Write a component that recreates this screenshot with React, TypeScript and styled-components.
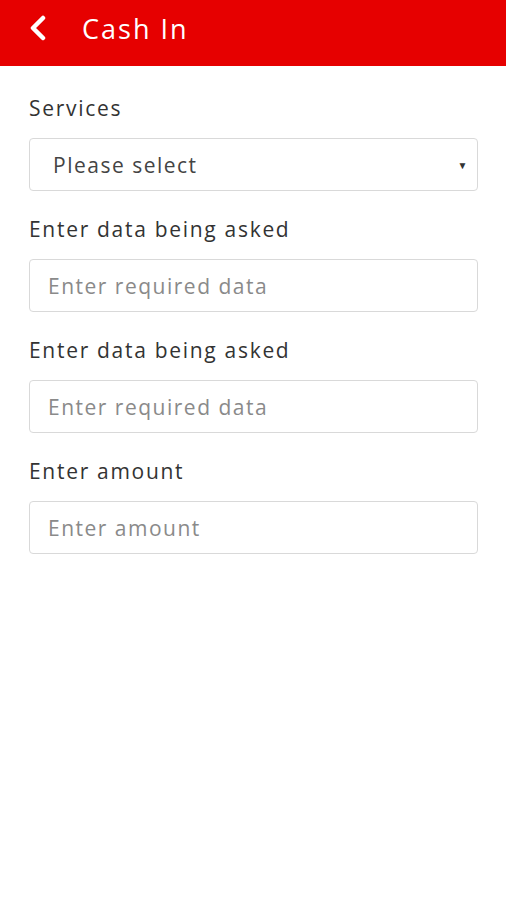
import { createGlobalStyle, styled } from 'styled-components'

const Global = createGlobalStyle`
  body {
    margin: 0;
    background: #fff;
    font-family: "Open Sans", sans-serif;
  }
  * { box-sizing: border-box; }
`

type Field = {
  label: string
  placeholder: string
  select?: boolean
}

const fields: Field[] = [
  { label: 'Services', placeholder: 'Please select', select: true },
  { label: 'Enter data being asked', placeholder: 'Enter required data' },
  { label: 'Enter data being asked', placeholder: 'Enter required data' },
  { label: 'Enter amount', placeholder: 'Enter amount' },
]

export default function App() {
  return (
    <Page>
      <Global />
      <Header>
        <BackButton aria-label="back">
          <svg width="20" height="26" viewBox="0 0 20 26">
            <polyline points="15,3 5,13 15,23" fill="none" stroke="#fff" strokeWidth="4.5" strokeLinecap="round" strokeLinejoin="round" />
          </svg>
        </BackButton>
        <Title>Cash In</Title>
      </Header>
      <Form>
        {fields.map((f, i) => (
          <Group key={i}>
            <Label>{f.label}</Label>
            {f.select ? (
              <SelectBox>
                <span>{f.placeholder}</span>
                <Caret>▼</Caret>
              </SelectBox>
            ) : (
              <Input placeholder={f.placeholder} />
            )}
          </Group>
        ))}
      </Form>
    </Page>
  )
}

const Page = styled.div`
  width: 506px;
  min-height: 900px;
  background: #fff;
`

const Header = styled.header`
  height: 66px;
  background: #e60000;
  display: flex;
  align-items: center;
  padding-left: 28px;
  gap: 34px;
`

const BackButton = styled.button`
  background: none;
  border: none;
  padding: 0;
  display: flex;
  align-items: center;
  margin-top: -10px;
`

const Title = styled.h1`
  margin: 0 0 10px;
  color: #fff;
  font-family: "Open Sans", sans-serif;
  font-weight: 500;
  font-size: 27px;
  letter-spacing: 2px;
`

const Form = styled.div`
  display: flex;
  flex-direction: column;
  gap: 25px;
  padding: 29px 28px 0 29px;
`

const Group = styled.div`
  display: flex;
  flex-direction: column;
  gap: 17px;
`

const Label = styled.label`
  font-size: 21px;
  line-height: 26px;
  color: #333;
  letter-spacing: 1.7px;
`

const fieldBase = `
  width: 100%;
  height: 53px;
  border: 1px solid #d9d9d9;
  border-radius: 4px;
  background: #fff;
  font-family: "Open Sans", sans-serif;
  font-size: 21px;
  letter-spacing: 1.5px;
`

const SelectBox = styled.div`
  ${fieldBase}
  display: flex;
  align-items: center;
  justify-content: space-between;
  padding: 0 8px 0 23px;
  color: #444;
`

const Caret = styled.span`
  font-size: 10px;
  color: #333;
`

const Input = styled.input`
  ${fieldBase}
  padding: 0 18px;
  color: #333;
  outline: none;
  &::placeholder {
    color: #8a8a8a;
  }
`
